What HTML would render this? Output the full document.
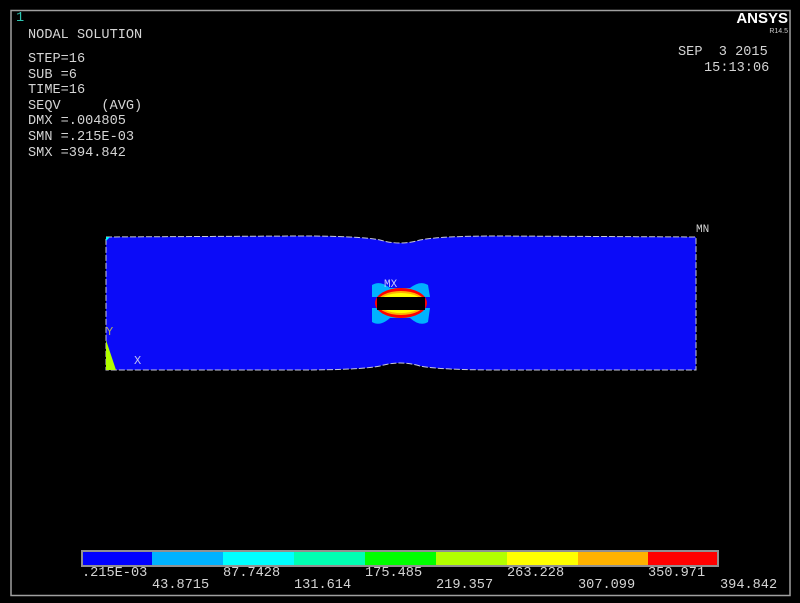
<!DOCTYPE html>
<html><head><style>
html,body{margin:0;padding:0;background:#000;width:800px;height:603px;overflow:hidden;position:relative}
svg{display:block;position:absolute;left:0;top:0}
.t{position:absolute;font-family:"Liberation Mono","DejaVu Sans Mono",monospace;color:#d4d4d4;font-size:13.6px;line-height:14px;white-space:pre;}
</style></head><body>
<svg width="800" height="603" viewBox="0 0 800 603">
<rect x="0" y="0" width="800" height="603" fill="#000"/>
<rect x="11" y="10.5" width="779" height="585" fill="none" stroke="#a0a0a0" stroke-width="1.5"/>
<path d="M106 237 L300 236 Q360 236 380 240 Q400 246 420 240 Q440 236 500 236 L696 237 L696 370 L500 370 Q440 370 420 366 Q400 360 380 366 Q360 370 300 370 L106 370 Z" fill="#0b0bf8" stroke="#c8c8d8" stroke-width="1" stroke-dasharray="6,2"/>
<path d="M106 340 L106 370 L116 370 Z" fill="#b2ff00"/>
<path d="M106 237 L110 237 L106 241 Z" fill="#00ffff"/>
<path d="M372 285 Q380 280 390 288 L410 288 Q420 280 428 285 L430 297 L372 297 Z" fill="#00b2ff"/>
<path d="M372 322 Q380 327 390 318 L410 318 Q420 327 428 322 L430 308 L372 308 Z" fill="#00b2ff"/>
<ellipse cx="401" cy="303" rx="26" ry="15" fill="#ff0000"/>
<ellipse cx="401" cy="303" rx="24" ry="12" fill="#ffb200"/>
<ellipse cx="401" cy="303" rx="22" ry="10" fill="#ffff00"/>
<rect x="377" y="297" width="48" height="13" fill="#000"/>
<rect x="81" y="550" width="638" height="17" fill="#909090"/>
<rect x="83" y="552" width="69" height="13" fill="#0000ff"/>
<rect x="152" y="552" width="71" height="13" fill="#00b2ff"/>
<rect x="223" y="552" width="71" height="13" fill="#00ffff"/>
<rect x="294" y="552" width="71" height="13" fill="#00ffb2"/>
<rect x="365" y="552" width="71" height="13" fill="#00ff00"/>
<rect x="436" y="552" width="71" height="13" fill="#b2ff00"/>
<rect x="507" y="552" width="71" height="13" fill="#ffff00"/>
<rect x="578" y="552" width="70" height="13" fill="#ffb200"/>
<rect x="648" y="552" width="69" height="13" fill="#ff0000"/>
</svg>
<div class="t" style="left:16px;top:12px;color:#2ec4b0">1</div>
<div class="t" style="left:28px;top:29px">NODAL SOLUTION</div>
<div class="t" style="left:28px;top:52px;line-height:15.6px">STEP=16
SUB =6
TIME=16
SEQV     (AVG)
DMX =.004805
SMN =.215E-03
SMX =394.842</div>
<div class="t" style="right:12px;top:12px;font-family:'Liberation Sans',sans-serif;font-weight:bold;font-size:15px;color:#fff">ANSYS</div>
<div class="t" style="right:12px;top:28px;font-family:'Liberation Sans',sans-serif;font-size:7px;line-height:7px;color:#ccc">R14.5</div>
<div class="t" style="left:678px;top:46px">SEP  3 2015</div>
<div class="t" style="left:704px;top:62px">15:13:06</div>
<div class="t" style="left:384px;top:278px;font-size:11px;color:#c8c8ff">MX</div>
<div class="t" style="left:696px;top:223px;font-size:11px">MN</div>
<div class="t" style="left:106px;top:325px;font-size:12px;color:#b0b060">Y</div>
<div class="t" style="left:134px;top:354px;font-size:12px;color:#c0c0f0">X</div>
<div class="t" style="left:82px;top:567px">.215E-03</div>
<div class="t" style="left:223px;top:567px">87.7428</div>
<div class="t" style="left:365px;top:567px">175.485</div>
<div class="t" style="left:507px;top:567px">263.228</div>
<div class="t" style="left:648px;top:567px">350.971</div>
<div class="t" style="left:152px;top:579px">43.8715</div>
<div class="t" style="left:294px;top:579px">131.614</div>
<div class="t" style="left:436px;top:579px">219.357</div>
<div class="t" style="left:578px;top:579px">307.099</div>
<div class="t" style="left:720px;top:579px">394.842</div>
</body></html>
